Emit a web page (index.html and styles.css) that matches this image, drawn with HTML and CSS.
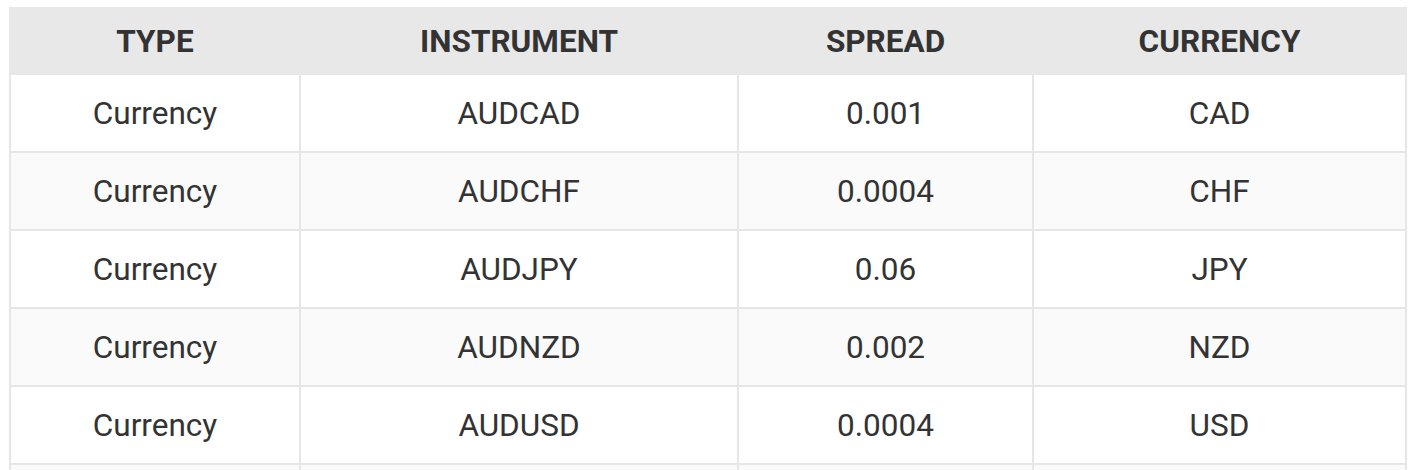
FILE: index.html
```html
<!DOCTYPE html>
<html>
<head>
<meta charset="utf-8">
<link rel="stylesheet" href="styles.css">
</head>
<body>
<table class="spreads">
  <colgroup>
    <col class="c1"><col class="c2"><col class="c3"><col class="c4">
  </colgroup>
  <thead>
    <tr><th>TYPE</th><th>INSTRUMENT</th><th>SPREAD</th><th>CURRENCY</th></tr>
  </thead>
  <tbody>
    <tr><td>Currency</td><td>AUDCAD</td><td>0.001</td><td>CAD</td></tr>
    <tr><td>Currency</td><td>AUDCHF</td><td>0.0004</td><td>CHF</td></tr>
    <tr><td>Currency</td><td>AUDJPY</td><td>0.06</td><td>JPY</td></tr>
    <tr><td>Currency</td><td>AUDNZD</td><td>0.002</td><td>NZD</td></tr>
    <tr><td>Currency</td><td>AUDUSD</td><td>0.0004</td><td>USD</td></tr>
    <tr class="partial"><td></td><td></td><td></td><td></td></tr>
  </tbody>
</table>
</body>
</html>
```
FILE: styles.css
```css
html, body {
  margin: 0;
  padding: 0;
  background: #ffffff;
  overflow: hidden;
}
body {
  padding: 7px 0 0 9px;
  font-family: Roboto, "Liberation Sans", sans-serif;
  color: #333333;
}
.spreads {
  border-collapse: collapse;
  width: 1396px;
  table-layout: fixed;
}
.c1 { width: 290px; }
.c2 { width: 438px; }
.c3 { width: 295px; }
.c4 { width: 373px; }
.spreads th {
  background: #e8e8e8;
  height: 64px;
  padding: 0;
  font-size: 31.5px;
  font-weight: 700;
  letter-spacing: 0;
  text-align: center;
  border: 2px solid #e8e8e8;
  color: #333333;
}
.spreads td {
  height: 76px;
  padding: 0;
  font-size: 31.5px;
  text-align: center;
  border: 2px solid #e6e6e6;
}
.spreads tbody tr:nth-child(even) td {
  background: #fafafa;
}
```
